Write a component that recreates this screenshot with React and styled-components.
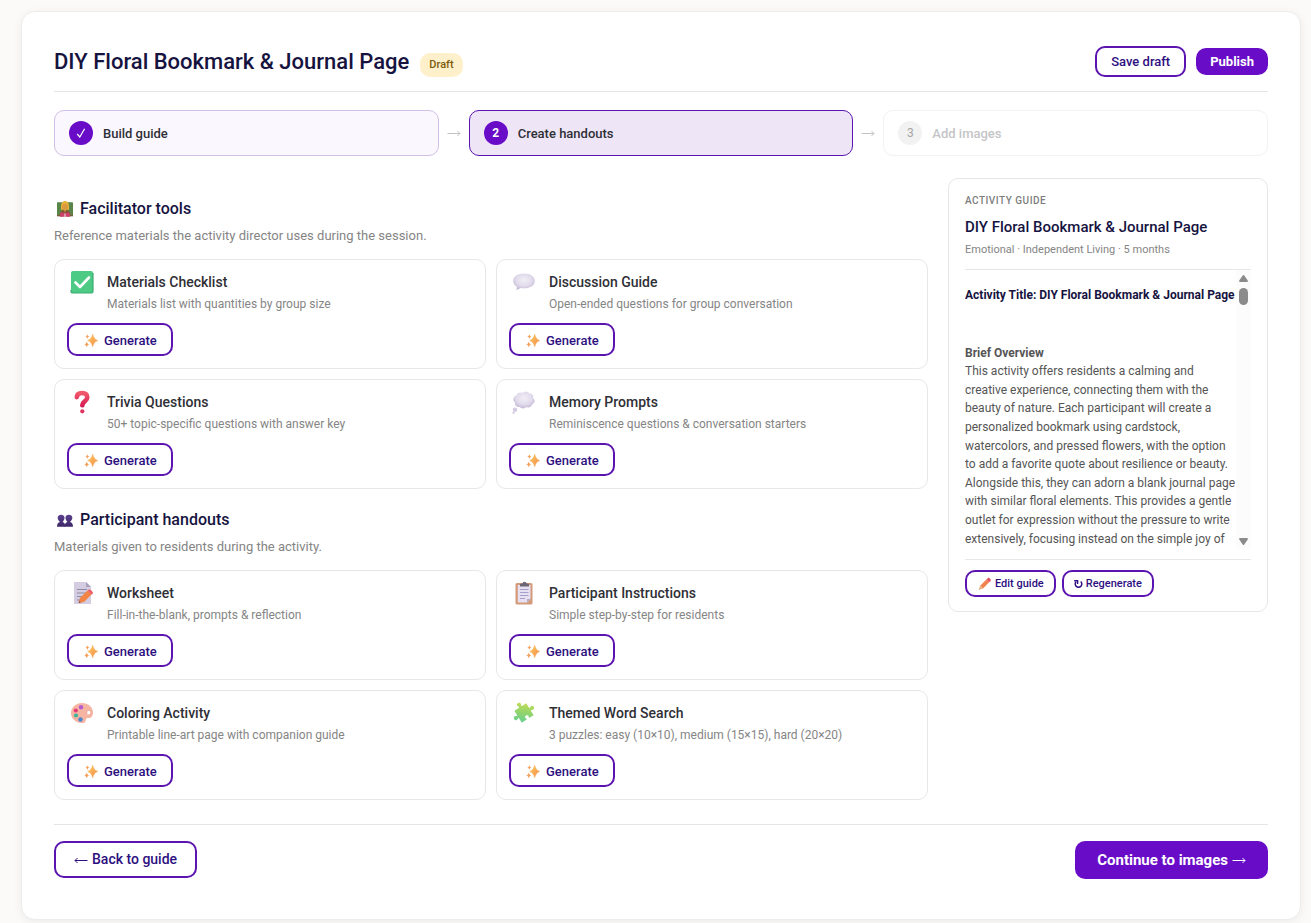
import React from "react";
import styled, { createGlobalStyle, css } from "styled-components";

const Global = createGlobalStyle`
  *, *::before, *::after { box-sizing: border-box; }
  body {
    margin: 0;
    background: #fbfaf8;
    font-family: Roboto, "Liberation Sans", sans-serif;
    color: #2f2f36;
  }
  h1, h2, h3, h4, p, ol, ul { margin: 0; padding: 0; font-weight: inherit; }
`;

const Page = styled.div`
  padding: 11px 10px 3px 21px;
`;

const Panel = styled.main`
  background: #fff;
  border: 1px solid #ececec;
  border-radius: 14px;
  padding: 34px 32px 40px;
  box-shadow: 0 2px 10px rgba(0, 0, 0, 0.06);
`;

const Header = styled.header`
  display: flex;
  align-items: center;
  justify-content: space-between;
  padding-bottom: 14px;
  border-bottom: 1px solid #e5e5e8;
`;

const TitleGroup = styled.div`
  display: flex;
  align-items: flex-end;
  gap: 11px;
`;

const Title = styled.h1`
  font-size: 22px;
  line-height: 31px;
  font-weight: 500;
  color: #16133f;
`;

const Badge = styled.span`
  padding: 0 9px;
  border-radius: 10px;
  background: #fff0cc;
  color: #7d5a0b;
  font-size: 11px;
  line-height: 24px;
  font-weight: 500;
`;

const Actions = styled.div`
  display: flex;
  align-items: center;
  gap: 10px;
`;

const sizes = {
  tiny: css`font-size: 11px; line-height: 15px; padding: 4px 10px; gap: 3px;`,
  small: css`font-size: 13px; line-height: 15px; padding: 6px 14px; gap: 5px;`,
  medium: css`font-size: 13px; line-height: 17px; padding: 7px 14px 5px; gap: 6px;`,
  large: css`font-size: 14px; line-height: 17px; padding: 8px 18px; gap: 4px;`,
};

const Button = styled.button`
  display: inline-flex;
  align-items: center;
  font-family: inherit;
  font-weight: 500;
  white-space: nowrap;
  color: #2d0f80;
  background: #fff;
  border: 2px solid #5b14b0;
  border-radius: 10px;
  cursor: pointer;
  ${(p) => sizes[p.$size]}
`;

const SolidButton = styled(Button)`
  color: #fff;
  background: #690cc8;
  border: 0;
  font-weight: 700;
  ${(p) => (p.$size === "large"
    ? css`font-size: 15px; line-height: 18px; padding: 10px 22px;`
    : css`padding: 6px 14px;`)}
`;

const Steps = styled.ol`
  display: flex;
  align-items: center;
  gap: 8px;
  margin: 18px 0 22px;
  list-style: none;
`;

const stepLooks = {
  done: css`background: #faf7fe; border-color: #d0c1e4;`,
  current: css`background: #eee6f7; border-color: #5b14b0;`,
  pending: css`background: #fff; border-color: #f2f2f2; color: #c5c5c8;`,
};

const Step = styled.li`
  flex: 1;
  display: flex;
  align-items: center;
  gap: 10px;
  padding: 10px 14px;
  border: 1px solid;
  border-radius: 10px;
  font-size: 13px;
  font-weight: 500;
  ${(p) => stepLooks[p.$state]}
`;

const StepNumber = styled.span`
  display: flex;
  align-items: center;
  justify-content: center;
  width: 24px;
  height: 24px;
  border-radius: 50%;
  font-size: 12px;
  font-weight: ${(p) => (p.$muted ? 400 : 700)};
  color: ${(p) => (p.$muted ? "#a5a5a5" : "#fff")};
  background: ${(p) => (p.$muted ? "#f2f2f2" : "#690cc8")};
`;

const StepArrow = styled.li`
  display: flex;
  color: #c2c2c2;
`;

const Body = styled.div`
  display: grid;
  grid-template-columns: minmax(0, 1fr) 320px;
  align-items: start;
  gap: 20px;
`;

const Section = styled.section`
  padding-top: 19px;
`;

const SectionTitle = styled.h2`
  display: flex;
  align-items: center;
  gap: 7px;
  padding-left: 3px;
  font-size: 16px;
  line-height: 24px;
  font-weight: 500;
  color: #16133f;
`;

const SectionNote = styled.p`
  margin: 5px 0 13px;
  font-size: 13px;
  line-height: 20px;
  color: #858585;
`;

const CardGrid = styled.div`
  display: grid;
  grid-template-columns: repeat(2, minmax(0, 1fr));
  gap: 10px;
`;

const Card = styled.article`
  padding: 12px;
  border: 1px solid #e7e7ea;
  border-radius: 10px;
`;

const CardHead = styled.div`
  display: grid;
  grid-template-columns: 30px minmax(0, 1fr);
  gap: 10px;
  margin-bottom: 9px;
`;

const CardIcon = styled.span`
  display: flex;
  justify-content: center;
  height: 20px;
  align-items: center;
`;

const CardTitle = styled.h3`
  font-size: 14px;
  line-height: 20px;
  font-weight: 500;
`;

const CardText = styled.p`
  margin-top: 3px;
  font-size: 12px;
  line-height: 19px;
  color: #858585;
`;

const Aside = styled.aside`
  padding: 16px 16px 14px;
  border: 1px solid #e7e7ea;
  border-radius: 10px;
`;

const AsideLabel = styled.p`
  font-size: 10px;
  line-height: 12px;
  font-weight: 500;
  letter-spacing: 0.05em;
  text-transform: uppercase;
  color: #7d7d7d;
`;

const AsideTitle = styled.h2`
  margin-top: 10px;
  font-size: 15px;
  line-height: 20px;
  font-weight: 500;
  color: #16133f;
`;

const AsideMeta = styled.p`
  margin-top: 5px;
  padding-bottom: 11px;
  font-size: 11px;
  line-height: 16px;
  color: #858585;
  border-bottom: 1px solid #e7e7ea;
`;

const Reader = styled.div`
  display: flex;
  height: 279px;
`;

const ReaderText = styled.div`
  flex: 1;
  min-width: 0;
  padding-top: 16px;
  overflow-y: auto;
  scrollbar-width: none;
  font-size: 12px;
  line-height: 1.55;
  color: #555;
`;

const ReaderTitle = styled.h3`
  margin-bottom: 39px;
  font-size: 12px;
  font-weight: 700;
  white-space: nowrap;
  color: #16133f;
`;

const ReaderHeading = styled.h4`
  font-size: 12px;
  font-weight: 700;
`;

const Scrollbar = styled.div`
  display: flex;
  flex-direction: column;
  align-items: center;
  justify-content: space-between;
  width: 15px;
  padding: 5px 0 4px;
  background: #fcfcfc;
`;

const ScrollTop = styled.div`
  display: flex;
  flex-direction: column;
  align-items: center;
  gap: 6px;
`;

const ScrollThumb = styled.div`
  width: 9px;
  height: 17px;
  border-radius: 5px;
  background: #8b8b8b;
`;

const AsideActions = styled.div`
  display: flex;
  gap: 6px;
  margin-top: 10px;
  padding-top: 10px;
  border-top: 1px solid #e7e7ea;
`;

const Footer = styled.footer`
  display: flex;
  align-items: flex-start;
  justify-content: space-between;
  margin-top: 24px;
  padding-top: 16px;
  border-top: 1px solid #e5e5e8;
`;

const Svg = ({ size = 24, children, ...rest }) => (
  <svg width={size} height={size} viewBox="0 0 24 24" fill="none" aria-hidden="true" {...rest}>
    {children}
  </svg>
);

const Arrow = ({ back }) => (
  <svg width="14" height="8" viewBox="0 0 14 8" fill="none" stroke="currentColor" aria-hidden="true">
    <path d={back ? "M13.5 4.5H1M3.500 2L1 4.500L3.500 7" : "M.5 4.5H13M10.500 2L13 4.500L10.500 7"} />
  </svg>
);

const Tick = () => (
  <svg width="10" height="10" viewBox="0 0 10 10" fill="none" stroke="#fff" aria-hidden="true">
    <path d="M1.200 6L3.800 9L8.600 .8" strokeWidth="1.200" />
  </svg>
);

const Reload = () => (
  <svg width="9" height="10" viewBox="0 0 9 10" fill="none" stroke="currentColor" aria-hidden="true">
    <path d="M6.700 2.500A3.300 3.300 0 1 1 2.100 2.700" strokeWidth="1.500" />
    <path d="M.2 1.700H3.600V5" strokeWidth="1.400" />
  </svg>
);

const Gradients = () => (
  <svg width="0" height="0" style={{ position: "absolute" }} aria-hidden="true">
    <defs>
      <linearGradient id="gold" x1="0" y1="0" x2="1" y2="1">
        <stop offset="0" stopColor="#ffcf58" /><stop offset="1" stopColor="#f38552" />
      </linearGradient>
      <radialGradient id="cloud" cx=".5" cy=".4" r=".6">
        <stop offset="0" stopColor="#f1eef6" /><stop offset=".6" stopColor="#e2dcec" /><stop offset="1" stopColor="#c4b9d6" />
      </radialGradient>
      <linearGradient id="ruby" x1="0" y1="0" x2="0" y2="1">
        <stop offset="0" stopColor="#f0586c" /><stop offset="1" stopColor="#d81f55" />
      </linearGradient>
      <linearGradient id="leaf" gradientUnits="userSpaceOnUse" x1="20" y1="3" x2="5" y2="21">
        <stop offset="0" stopColor="#c9dd52" /><stop offset="0.5" stopColor="#92d46c" /><stop offset="1" stopColor="#62d09a" />
      </linearGradient>
      <linearGradient id="violet" x1="0" y1="0" x2="0" y2="1">
        <stop offset="0" stopColor="#5b4190" /><stop offset="1" stopColor="#3d2868" />
      </linearGradient>
    </defs>
  </svg>
);

const Sparkles = () => (
  <Svg size={15}>
    <path fill="url(#gold)" d="M15.500 2C16.800 7 18.500 9.800 23.500 12C18.500 14.200 16.800 17 15.500 22C14.200 17 12.500 14.200 7.500 12C12.500 9.800 14.200 7 15.500 2Z" stroke="#f8ae55" strokeWidth=".8" strokeLinejoin="round" />
    <path fill="#f5a15c" d="M7 2C7.700 4.300 8.400 5 10.500 5.700C8.400 6.400 7.700 7.100 7 9.400C6.300 7.100 5.600 6.400 3.500 5.700C5.600 5 6.300 4.300 7 2ZM6 13.500C6.900 16.800 7.700 17.600 10.500 18.300C7.700 19 6.900 19.800 6 22.800C5.100 19.800 4.300 19 1.500 18.300C4.300 17.600 5.100 16.800 6 13.500Z" />
  </Svg>
);

const Check = () => (
  <Svg>
    <rect x="1" y="1" width="22" height="22" rx="2" fill="#4dca83" />
    <path d="M1 20V21Q1 23 3 23H21Q23 23 23 21V3" stroke="#3cab72" strokeWidth="1.2" />
    <path d="M5.500 12.500L10 17L19 7.500" stroke="#fff" strokeWidth="2.600" strokeLinecap="round" strokeLinejoin="round" />
  </Svg>
);

const Speech = () => (
  <Svg>
    <path fill="url(#cloud)" d="M12 3.500C18.500 3.500 22.800 6.700 22.800 11C22.800 15.200 18.500 18.300 12 18.300C10.800 18.300 9.700 18.200 8.700 18L5.300 19.800C4.500 20.200 4.200 19.500 4.600 18.800L5 16.800C2.700 15.500 1.200 13.600 1.200 11C1.200 6.700 5.500 3.500 12 3.500Z" />
  </Svg>
);

const Question = () => (
  <Svg>
    <path d="M6.800 7.200C7 4 9 3 12 3C15.500 3 17.300 4.700 17.300 7.300C17.300 11.300 12.500 10.800 12.300 15.300" stroke="url(#ruby)" strokeWidth="4.600" strokeLinecap="round" />
    <circle cx="12.300" cy="21.300" r="2.100" fill="#e03460" />
  </Svg>
);

const Thought = () => (
  <Svg>
    <path fill="url(#cloud)" d="M4.500 5.500C5 3 8 2 10 3C12 1 16 1.200 17.500 3.500C20.500 3.500 22 6 21 8C23.500 9.500 23.200 13 20.500 14C19.500 17 16.500 18 14.500 17C12.500 19 9 18.700 7.800 17C5 17.300 2.500 15.500 3 12.500C.5 11 .8 6.500 4.500 5.500Z" />
    <circle cx="3" cy="19.700" r="2.200" fill="#d4cae2" /><circle cx="1.500" cy="22.700" r="1" fill="#c9bedb" />
  </Svg>
);

const Memo = () => (
  <Svg>
    <path fill="#d4cde2" d="M4 1H16L21 6V23H4Z" /><path fill="#aaa0bb" d="M16 1L21 6H16Z" />
    <path d="M7 8.500H17M7 12H16M7 15.500H12M7 19H10" stroke="#908ba5" />
    <path fill="#f28444" d="M8.500 22L10 17L17.500 9.500L21.500 13.500L14 21Z" />
    <path fill="#ee5d68" d="M17.500 9.500L19 8.500C20.500 8 23.500 11 22.800 12.500L21.500 13.800Z" />
    <path fill="#9b5a50" d="M8.500 22L9.300 19.500L11 21.400Z" />
  </Svg>
);

const Clipboard = () => (
  <Svg>
    <rect x="3.500" y="2" width="17" height="21.500" rx="1.500" fill="#d39b7b" />
    <path fill="#e7e0f0" d="M5.800 4H18.500V18L15 21.500H5.800Z" /><path fill="#b9aac9" d="M15 21.500V18H18.500Z" />
    <path fill="#6b6675" d="M8 5.500V3.500Q8 2.500 9.500 2.500H10.500Q10.500 .8 12.500 .8T14.500 2.500H15.500Q17 2.500 17 3.500V5.500Z" />
    <path d="M8 8.500H16.500M8 11.500H16.500M8 14.500H16.500M8 17.500H13" stroke="#a2a2cc" />
  </Svg>
);

const Palette = () => (
  <Svg>
    <path fill="#f6b4a2" d="M12 2C18 2 23 6 23 11.500C23 15 21.500 17 19 17C16.500 17 16 17.500 15.800 19C15.500 21.500 14 22 12 22C5.500 22 1 17.500 1 12S6 2 12 2Z" />
    <path fill="#fff" stroke="#e29686" strokeWidth=".6" d="M17 10.500C18.500 8.500 21.300 9.700 20.800 12S17.500 14.500 16.800 13Z" />
    <circle cx="11" cy="6.300" r="2.200" fill="#b45bd0" /><circle cx="5.800" cy="9.500" r="2.100" fill="#e33b78" />
    <circle cx="6" cy="14.500" r="2.100" fill="#3db39b" /><circle cx="10.500" cy="18.500" r="2.200" fill="#4a86cc" />
  </Svg>
);

const Puzzle = () => (
  <Svg>
    <g transform="rotate(-32 12 12)" fill="url(#leaf)">
      <path d="M5 5H10.200C11.200 5 11 4.200 10.500 3.500C9.500 2 10.500 .4 12.200 .4S14.900 2 13.900 3.500C13.400 4.200 13.200 5 14.200 5H19V10C19 11 19.800 10.800 20.500 10.300C22 9.300 23.600 10.400 23.600 12S22 14.700 20.500 13.700C19.800 13.200 19 13 19 14V19H14.500C13.500 19 13.600 18.200 14 17.500C14.700 16.200 13.800 15.200 12.400 15.200S10.100 16.200 10.800 17.500C11.200 18.200 11.300 19 10.300 19H5V14C5 13 4.200 13.200 3.500 13.700C2 14.700 .4 13.600 .4 12S2 9.300 3.500 10.300C4.200 10.800 5 11 5 10Z" />
    </g>
  </Svg>
);

const Teacher = () => (
  <Svg size={16}>
    <rect x="0" y="2" width="24" height="20" rx="1" fill="#5a8549" /><path d="M0 22H24" stroke="#805b38" strokeWidth="2" />
    <path fill="#8f5036" d="M4 23C4 16 7 14 12 14S20 16 20 23Z" />
    <path fill="#e9b33a" d="M6 8C6 3 9 0 12 0S18 3 18 8V13H6Z" />
    <circle cx="12" cy="8.500" r="4.500" fill="#d99a40" />
    <path fill="#d99a40" d="M9.500 12H14.500L12 17Z" />
    <path fill="#cf3f6c" d="M5 17L12 19L19 17V24L12 23L5 24Z" /><path d="M12 18.500V23.500" stroke="#f3e3ea" strokeWidth="1.500" />
  </Svg>
);

const People = () => (
  <Svg size={16}>
    <path fill="url(#violet)" d="M0 22C0 17.500 2 15.500 4.500 15C2.500 13 1 11 1 8.500C1 5.500 3.500 4 6.200 4S11.300 5.500 11.300 8.500C11.300 11 10 13 8.500 15C10.500 15.500 12.500 17.500 12.500 22Z" />
    <path fill="url(#violet)" d="M11.500 22C11.500 17.500 13.500 15.500 15.500 15C14 13 12.700 11 12.700 8.500C12.700 5.500 15 4 17.800 4S23 5.500 23 8.500C23 11 21.500 13 19.500 15C22 15.500 24 17.500 24 22Z" />
  </Svg>
);

const Pencil = () => (
  <Svg size={15}>
    <path fill="#f28350" d="M3 22L5.500 15L15 5.500L19.500 10L10 19.500Z" />
    <path fill="#e2535d" d="M15 5.500L17.500 3C19.300 2 22.800 5.500 22 7.500L19.500 10Z" /><path fill="#e8b78b" d="M3 22L5.500 15L10 19.500Z" />
  </Svg>
);

const Triangle = ({ down }) => (
  <svg width="9" height="7" viewBox="0 0 9 7" fill="#8b8b8b" aria-hidden="true">
    <path d={down ? "M.7 0H8.300Q9.300 .7 8.600 1.700L5.300 6.400Q4.500 7.400 3.700 6.400L.4 1.700Q-.3 .7 .7 0Z" : "M.7 7H8.300Q9.300 6.300 8.600 5.300L5.300 .6Q4.500 -.4 3.700 .6L.4 5.300Q-.3 6.300 .7 7Z"} />
  </svg>
);

const sections = [
  {
    title: "Facilitator tools",
    Icon: Teacher,
    note: "Reference materials the activity director uses during the session.",
    cards: [
      ["Materials Checklist", "Materials list with quantities by group size", Check],
      ["Discussion Guide", "Open-ended questions for group conversation", Speech],
      ["Trivia Questions", "50+ topic-specific questions with answer key", Question],
      ["Memory Prompts", "Reminiscence questions & conversation starters", Thought],
    ],
  },
  {
    title: "Participant handouts",
    Icon: People,
    note: "Materials given to residents during the activity.",
    cards: [
      ["Worksheet", "Fill-in-the-blank, prompts & reflection", Memo],
      ["Participant Instructions", "Simple step-by-step for residents", Clipboard],
      ["Coloring Activity", "Printable line-art page with companion guide", Palette],
      ["Themed Word Search", "3 puzzles: easy (10×10), medium (15×15), hard (20×20)", Puzzle],
    ],
  },
];

const ToolCard = ({ title, text, Icon }) => (
  <Card>
    <CardHead>
      <CardIcon><Icon /></CardIcon>
      <div>
        <CardTitle>{title}</CardTitle>
        <CardText>{text}</CardText>
      </div>
    </CardHead>
    <Button type="button" $size="medium"><Sparkles />Generate</Button>
  </Card>
);

export default function App() {
  return (
    <Page>
      <Global />
      <Gradients />
      <Panel>
        <Header>
          <TitleGroup>
            <Title>DIY Floral Bookmark &amp; Journal Page</Title>
            <Badge>Draft</Badge>
          </TitleGroup>
          <Actions>
            <Button type="button" $size="small">Save draft</Button>
            <SolidButton type="button" $size="small">Publish</SolidButton>
          </Actions>
        </Header>

        <Steps>
          <Step $state="done"><StepNumber><Tick /></StepNumber>Build guide</Step>
          <StepArrow aria-hidden="true"><Arrow /></StepArrow>
          <Step $state="current" aria-current="step"><StepNumber>2</StepNumber>Create handouts</Step>
          <StepArrow aria-hidden="true"><Arrow /></StepArrow>
          <Step $state="pending"><StepNumber $muted>3</StepNumber>Add images</Step>
        </Steps>

        <Body>
          <div>
            {sections.map(({ title, Icon, note, cards }) => (
              <Section key={title}>
                <SectionTitle><Icon />{title}</SectionTitle>
                <SectionNote>{note}</SectionNote>
                <CardGrid>
                  {cards.map(([name, text, CardGlyph]) => (
                    <ToolCard key={name} title={name} text={text} Icon={CardGlyph} />
                  ))}
                </CardGrid>
              </Section>
            ))}
          </div>

          <Aside>
            <AsideLabel>Activity guide</AsideLabel>
            <AsideTitle>DIY Floral Bookmark &amp; Journal Page</AsideTitle>
            <AsideMeta>Emotional · Independent Living · 5 months</AsideMeta>
            <Reader>
              <ReaderText>
                <ReaderTitle>Activity Title: DIY Floral Bookmark &amp; Journal Page</ReaderTitle>
                <ReaderHeading>Brief Overview</ReaderHeading>
                <p>
                  This activity offers residents a calming and creative experience, connecting them with
                  the beauty of nature. Each participant will create a personalized bookmark using
                  cardstock, watercolors, and pressed flowers, with the option to add a favorite quote
                  about resilience or beauty. Alongside this, they can adorn a blank journal page with
                  similar floral elements. This provides a gentle outlet for expression without the
                  pressure to write extensively, focusing instead on the simple joy of
                </p>
              </ReaderText>
              <Scrollbar aria-hidden="true">
                <ScrollTop><Triangle /><ScrollThumb /></ScrollTop>
                <Triangle down />
              </Scrollbar>
            </Reader>
            <AsideActions>
              <Button type="button" $size="tiny"><Pencil />Edit guide</Button>
              <Button type="button" $size="tiny"><Reload />Regenerate</Button>
            </AsideActions>
          </Aside>
        </Body>

        <Footer>
          <Button type="button" $size="large"><Arrow back />Back to guide</Button>
          <SolidButton type="button" $size="large">Continue to images<Arrow /></SolidButton>
        </Footer>
      </Panel>
    </Page>
  );
}
